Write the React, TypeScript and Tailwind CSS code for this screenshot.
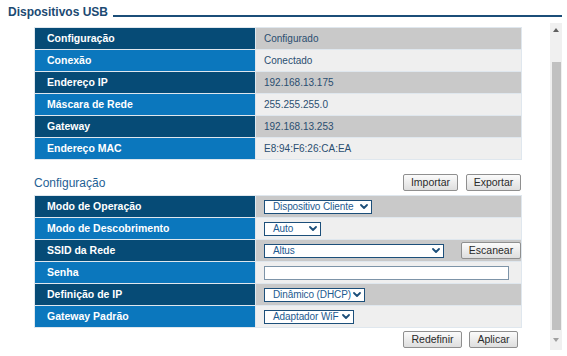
import React from "react";

const Chevron = () => (
  <svg width="8" height="5" viewBox="0 0 8 5" className="shrink-0 ml-[2px]">
    <path d="M1 1 L4 4 L7 1" fill="none" stroke="#1c4f7a" strokeWidth="1.8" strokeLinecap="round" strokeLinejoin="round" />
  </svg>
);

const Select = ({ text, w }: { text: string; w: string }) => (
  <div className={`${w} shrink-0 h-[14px] border-[1.5px] border-[#1c4f7a] bg-white flex items-center justify-between pl-[8px] pr-[3px] text-[10px] leading-none text-[#1d5a90] whitespace-nowrap overflow-hidden`}>
    <span className="whitespace-nowrap tracking-[-0.1px]">{text}</span>
    <Chevron />
  </div>
);

const Btn = ({ text, w }: { text: string; w: string }) => (
  <div className={`${w} shrink-0 h-[17px] border border-[#8f8f8f] rounded-[2px] bg-gradient-to-b from-[#fbfbfb] to-[#dedede] flex items-center justify-center text-[10.5px] leading-none text-[#2a2a2a] whitespace-nowrap`}>
    {text}
  </div>
);

const Row = ({ label, dark, children }: { label: string; dark: boolean; children: React.ReactNode }) => (
  <div className="flex h-[21px] gap-px">
    <div className={`w-[220px] shrink-0 flex items-center pl-[12px] text-[10.5px] font-bold text-white ${dark ? "bg-[#064b76]" : "bg-[#0b77bd]"}`}>
      {label}
    </div>
    <div className={`flex-1 flex items-center pl-[8px] text-[10px] text-[#2a4e70] ${dark ? "bg-[#c9c9c9]" : "bg-[#efefef]"}`}>
      {children}
    </div>
  </div>
);

export default function App() {
  const info: [string, string][] = [
    ["Configuração", "Configurado"],
    ["Conexão", "Conectado"],
    ["Endereço IP", "192.168.13.175"],
    ["Máscara de Rede", "255.255.255.0"],
    ["Gateway", "192.168.13.253"],
    ["Endereço MAC", "E8:94:F6:26:CA:EA"],
  ];
  return (
    <div className="w-[567px] h-[356px] bg-white overflow-hidden" style={{ fontFamily: '"Liberation Sans", Arial, sans-serif' }}>
      <div className="flex items-end pl-[8px] pt-[5px] pr-[5px]">
        <span className="text-[12px] font-bold leading-[14px] text-[#1c4a72]">Dispositivos USB</span>
        <div className="flex-1 h-[2px] bg-[#1b4d78] ml-[5px] mb-[2px]" />
      </div>
      <div className="flex mt-[4px]">
        <div className="ml-[34px] w-[488px] pt-[4px]">
          <div className="flex flex-col gap-px bg-[#dfe7ee] p-px">
            {info.map(([l, v], i) => (
              <Row key={l} label={l} dark={i % 2 === 0}>
                {v}
              </Row>
            ))}
          </div>
          <div className="flex items-center justify-between mt-[14px] h-[17px]">
            <span className="text-[12px] text-[#1f5f95]">Configuração</span>
            <div className="flex gap-[8px] pr-px">
              <Btn text="Importar" w="w-[55px]" />
              <Btn text="Exportar" w="w-[55px]" />
            </div>
          </div>
          <div className="flex flex-col gap-px bg-[#dfe7ee] p-px mt-[4px]">
            <Row label="Modo de Operação" dark>
              <Select text="Dispositivo Cliente" w="w-[108px]" />
            </Row>
            <Row label="Modo de Descobrimento" dark={false}>
              <Select text="Auto" w="w-[57px]" />
            </Row>
            <Row label="SSID da Rede" dark>
              <div className="flex items-center w-full justify-between">
                <Select text="Altus" w="w-[180px]" />
                <Btn text="Escanear" w="w-[60px]" />
              </div>
            </Row>
            <Row label="Senha" dark={false}>
              <div className="w-[245px] h-[14px] border border-[#7d94a8] bg-white" />
            </Row>
            <Row label="Definição de IP" dark>
              <Select text="Dinâmico (DHCP)" w="w-[101px]" />
            </Row>
            <Row label="Gateway Padrão" dark={false}>
              <Select text="Adaptador WiF" w="w-[90px]" />
            </Row>
          </div>
          <div className="flex justify-end gap-[7px] pr-[4px] mt-[3px]">
            <Btn text="Redefinir" w="w-[59px]" />
            <Btn text="Aplicar" w="w-[49px]" />
          </div>
        </div>
        <div className="ml-[28px] w-[12px] h-[327px] bg-[#f0f0f0] flex flex-col items-center">
          <div className="h-[12px] flex items-center justify-center mt-[1px]">
            <svg width="6" height="4" viewBox="0 0 6 4"><path d="M0 4 L3 0 L6 4 Z" fill="#606060" /></svg>
          </div>
          <div className="w-[9px] bg-[#c1c1c1] mt-[26px] h-[268px]" />
          <div className="flex-1 flex items-center justify-center">
            <svg width="6" height="4" viewBox="0 0 6 4"><path d="M0 0 L3 4 L6 0 Z" fill="#a0a0a0" /></svg>
          </div>
        </div>
      </div>
    </div>
  );
}
